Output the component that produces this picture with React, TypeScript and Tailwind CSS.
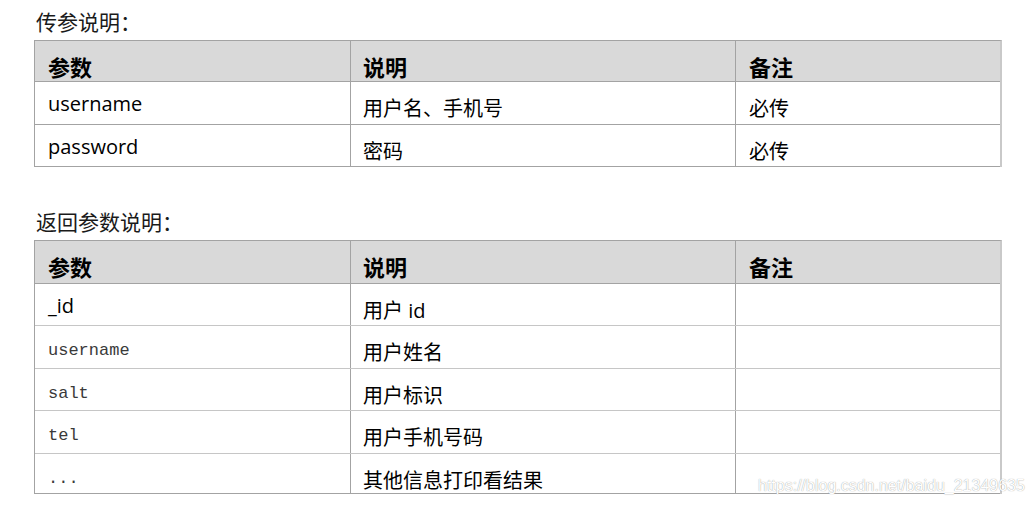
const sans = "font-['Open_Sans','Noto_Sans_CJK_SC',sans-serif]";

type Row = { name: string; mono?: boolean; desc: string; note?: string; h: string };

const inputRows: Row[] = [
  { name: "username", desc: "用户名、手机号", note: "必传", h: "h-[43px]" },
  { name: "password", desc: "密码", note: "必传", h: "h-[42px]" },
];

const outputRows: Row[] = [
  { name: "_id", desc: "用户 id", h: "h-[42px]" },
  { name: "username", mono: true, desc: "用户姓名", h: "h-[43px]" },
  { name: "salt", mono: true, desc: "用户标识", h: "h-[42px]" },
  { name: "tel", mono: true, desc: "用户手机号码", h: "h-[43px]" },
  { name: "...", mono: true, desc: "其他信息打印看结果", h: "h-[40px]" },
];

const HeaderRow = ({ h }: { h: string }) => (
  <div className={`flex ${h} bg-[#d9d9d9] border-b border-[#a3a3a3]`}>
    <div className="w-[316px] border-r border-[#a3a3a3] pl-[13px] pt-[15px] text-[22px] font-bold leading-none text-black">
      参数
    </div>
    <div className="w-[385px] border-r border-[#a3a3a3] pl-[12px] pt-[15px] text-[22px] font-bold leading-none text-black">
      说明
    </div>
    <div className="w-[264px] pl-[13px] pt-[15px] text-[22px] font-bold leading-none text-black">
      备注
    </div>
  </div>
);

const DataTable = ({
  rows,
  headH,
  lineColor,
}: {
  rows: Row[];
  headH: string;
  lineColor: string;
}) => (
  <div className={`w-[968px] border-l border-t border-r-2 border-[#a3a3a3] border-r-[#c9c9c9] ${sans}`}>
    <HeaderRow h={headH} />
    {rows.map((r, i) => (
      <div
        key={r.name + i}
        className={`flex ${r.h} ${i < rows.length - 1 ? lineColor : "border-[#a3a3a3]"} border-b`}
      >
        <div
          className={`w-[316px] border-r border-r-[#a3a3a3] pl-[13px] leading-none ${
            r.mono
              ? "pt-[16px] font-['Liberation_Mono',monospace] text-[17px] text-[#3a3a3a]"
              : "pt-[12px] text-[20px] text-black"
          }`}
        >
          {r.name}
        </div>
        <div className="w-[385px] border-r border-r-[#a3a3a3] pl-[12px] pt-[17px] text-[20px] leading-none text-black">
          {r.desc}
        </div>
        <div className="w-[264px] pl-[13px] pt-[17px] text-[20px] leading-none text-black">
          {r.note}
        </div>
      </div>
    ))}
  </div>
);

export default function App() {
  return (
    <div className="relative w-[1032px] h-[507px] bg-white overflow-hidden">
      <div className="pl-[34px] flex flex-col">
        <div className="h-[40px] pl-[2px] pt-[11px] text-[21px] leading-none text-[#1a1a1a] font-['Noto_Sans_CJK_SC',sans-serif]">
          传参说明：
        </div>
        <DataTable rows={inputRows} headH="h-[41px]" lineColor="border-[#a3a3a3]" />
        <div className="h-[73px] pl-[2px] pt-[44px] text-[21px] leading-none text-[#1a1a1a] font-['Noto_Sans_CJK_SC',sans-serif]">
          返回参数说明：
        </div>
        <DataTable rows={outputRows} headH="h-[43px]" lineColor="border-[#c6c6c6]" />
      </div>
      <div className="absolute left-[758px] top-[478px] text-[16px] leading-none text-white font-['Liberation_Sans',Arial,sans-serif] [text-shadow:0_0_1px_#8a8a8a]">
        https://blog.csdn.net/baidu_21349635
      </div>
    </div>
  );
}
